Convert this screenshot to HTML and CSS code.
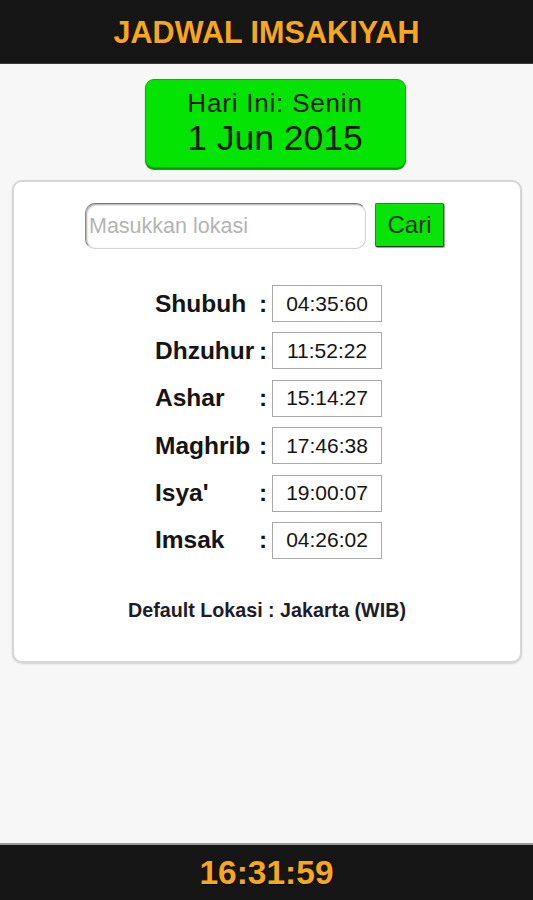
FILE: index.html
```html
<!DOCTYPE html>
<html lang="id">
<head>
<meta charset="utf-8">
<title>Jadwal Imsakiyah</title>
<link rel="stylesheet" href="styles.css">
</head>
<body>
<div class="app">
  <header class="topbar"><h1 class="title">JADWAL IMSAKIYAH</h1></header>
  <main class="main">
    <div class="today">
      <div class="today-day">Hari Ini: Senin</div>
      <div class="today-date">1 Jun 2015</div>
    </div>
    <section class="card">
      <form class="search">
        <input class="search-input" type="text" placeholder="Masukkan lokasi">
        <button class="search-btn" type="button">Cari</button>
      </form>
      <div class="times">
        <div class="t-label">Shubuh</div><div class="t-colon">:</div><div class="t-box">04:35:60</div>
        <div class="t-label">Dhzuhur</div><div class="t-colon">:</div><div class="t-box">11:52:22</div>
        <div class="t-label">Ashar</div><div class="t-colon">:</div><div class="t-box">15:14:27</div>
        <div class="t-label">Maghrib</div><div class="t-colon">:</div><div class="t-box">17:46:38</div>
        <div class="t-label">Isya'</div><div class="t-colon">:</div><div class="t-box">19:00:07</div>
        <div class="t-label">Imsak</div><div class="t-colon">:</div><div class="t-box">04:26:02</div>
      </div>
      <p class="default-loc">Default Lokasi : Jakarta (WIB)</p>
    </section>
  </main>
  <footer class="bottombar"><div class="clock">16:31:59</div></footer>
</div>
</body>
</html>
```

FILE: styles.css
```css
* { box-sizing: border-box; }
html, body { margin: 0; padding: 0; }
body {
  font-family: "Liberation Sans", Arial, sans-serif;
  background: #f7f7f7;
  color: #111;
}
.app {
  height: 900px;
  display: flex;
  flex-direction: column;
}
.topbar {
  height: 64px;
  background: #161616;
  border-bottom: 1px solid #3a3a3a;
  display: flex;
  align-items: center;
  justify-content: center;
}
.title {
  margin: 0;
  font-size: 30.6px;
  font-weight: bold;
  color: #f5a71d;
  text-shadow: 1px 1px 1px #000, 0 0 2px #3a2500;
  padding-top: 1px;
}
.main {
  flex: 1;
  display: flex;
  flex-direction: column;
  align-items: center;
  padding: 15px 11px 0 12px;
}
.today {
  width: 261px;
  height: 89px;
  margin-left: 16px;
  background: #03e403;
  border: 1px solid #06b806;
  border-radius: 9px;
  box-shadow: 0 2px 1px #079407;
  display: flex;
  flex-direction: column;
  align-items: center;
  justify-content: center;
  color: #0c1a0c;
  padding-bottom: 2px;
}
.today-day {
  font-size: 26px;
  line-height: 30px;
  letter-spacing: 0.8px;
}
.today-date {
  font-size: 35.5px;
  line-height: 40px;
}
.card {
  align-self: stretch;
  margin-top: 12px;
  height: 483px;
  background: #fff;
  border: 2px solid #d6d6d6;
  border-radius: 10px;
  box-shadow: 0 1px 2px rgba(0,0,0,0.15);
  padding: 21px 0 0 0;
  display: flex;
  flex-direction: column;
  align-items: center;
}
.search {
  display: flex;
  align-items: flex-start;
  gap: 9px;
  margin: 0 5px 0 0;
}
.search-input {
  width: 281px;
  height: 46px;
  border: 1px solid #d2d2d2;
  border-top-color: #777;
  border-left-color: #888;
  border-radius: 10px;
  box-shadow: inset 1px 1px 2px rgba(0,0,0,0.35);
  font-family: "Liberation Sans", Arial, sans-serif;
  font-size: 21.5px;
  padding: 0 3px;
  color: #333;
  background: #fff;
}
.search-input::placeholder { color: #b4b4b4; }
.search-btn {
  width: 69px;
  height: 44px;
  background: #08e408;
  border: 1px solid #1f3f1f;
  border-top-color: #3a7a3a;
  border-left-color: #3a7a3a;
  border-radius: 2px;
  box-shadow: 1px 1px 1px rgba(0,0,0,0.4);
  font-family: "Liberation Sans", Arial, sans-serif;
  font-size: 24px;
  color: #113311;
  padding: 0;
}
.times {
  margin-top: 36px;
  display: grid;
  grid-template-columns: 104px 13px 110px;
  grid-auto-rows: 37px;
  row-gap: 10.4px;
  column-gap: 0;
  align-items: center;
  margin-left: 3px;
}
.t-label {
  font-size: 24.5px;
  font-weight: bold;
  color: #141414;
  white-space: nowrap;
}
.t-colon {
  font-size: 24.5px;
  font-weight: bold;
  color: #141414;
}
.t-box {
  height: 37px;
  border: 1px solid #a9a9a9;
  display: flex;
  align-items: center;
  justify-content: center;
  font-size: 21px;
  color: #141414;
  background: #fff;
}
.default-loc {
  margin: 40px 0 0 0;
  font-size: 19.7px;
  font-weight: bold;
  color: #1c1c2a;
}
.bottombar {
  height: 57px;
  background: #161616;
  border-top: 2px solid #9a9a9a;
  display: flex;
  align-items: center;
  justify-content: center;
}
.clock {
  font-size: 33.5px;
  font-weight: bold;
  color: #f5a71d;
  text-shadow: 1px 1px 1px #000, 0 0 2px #3a2500;
}
```
